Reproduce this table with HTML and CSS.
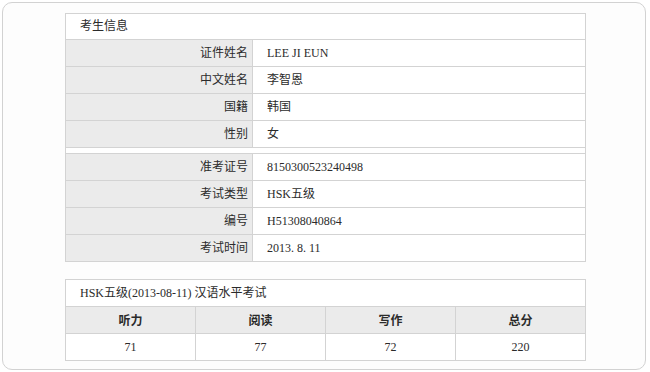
FILE: index.html
```html
<!DOCTYPE html>
<html lang="zh">
<head>
<meta charset="utf-8">
<link rel="stylesheet" href="styles.css">
</head>
<body>
<div class="frame">
  <table class="info">
    <colgroup><col class="c-label"><col class="c-value"></colgroup>
    <tr><td class="title" colspan="2">考生信息</td></tr>
    <tr><td class="label">证件姓名</td><td class="value">LEE JI EUN</td></tr>
    <tr><td class="label">中文姓名</td><td class="value">李智恩</td></tr>
    <tr><td class="label">国籍</td><td class="value">韩国</td></tr>
    <tr><td class="label">性别</td><td class="value">女</td></tr>
    <tr class="spacer"><td colspan="2"></td></tr>
    <tr><td class="label">准考证号</td><td class="value">8150300523240498</td></tr>
    <tr><td class="label">考试类型</td><td class="value">HSK五级</td></tr>
    <tr><td class="label">编号</td><td class="value">H51308040864</td></tr>
    <tr><td class="label">考试时间</td><td class="value">2013. 8. 11</td></tr>
  </table>
  <table class="scores">
    <colgroup><col class="c-q"><col class="c-q"><col class="c-q"><col class="c-q"></colgroup>
    <tr><td class="title" colspan="4">HSK五级(2013-08-11) 汉语水平考试</td></tr>
    <tr class="head"><td>听力</td><td>阅读</td><td>写作</td><td>总分</td></tr>
    <tr class="data"><td>71</td><td>77</td><td>72</td><td>220</td></tr>
  </table>
</div>
</body>
</html>
```
FILE: styles.css
```css
html, body {
  margin: 0;
  padding: 0;
  background: #ffffff;
}
body {
  font-family: "Liberation Serif", "Noto Sans CJK SC", serif;
  font-size: 12px;
  color: #2b2b2b;
}
.frame {
  margin: 2px;
  width: 644px;
  height: 368px;
  box-sizing: border-box;
  border: 1px solid #d2d2d2;
  border-radius: 10px;
  background: #fdfdfd;
  padding-top: 10px;
}
table {
  width: 521px;
  margin: 0 0 0 62px;
  border-collapse: separate;
  border-spacing: 0;
  border-top: 1px solid #d3d3d3;
  border-left: 1px solid #d3d3d3;
  table-layout: fixed;
}
.c-label { width: 187px; }
.c-q { width: 130px; }
td {
  padding: 0;
  border-right: 1px solid #d3d3d3;
  border-bottom: 1px solid #d3d3d3;
  line-height: 26px;
  white-space: nowrap;
}
.title {
  background: #ffffff;
  padding-left: 14px;
  line-height: 25px;
}
.info .label {
  background: #ebebeb;
  text-align: right;
  padding-right: 4px;
}
.info .value {
  background: #ffffff;
  padding-left: 14px;
}
.spacer td {
  line-height: 5px;
  height: 5px;
  background: #ffffff;
}
.scores {
  margin-top: 17px;
}
.scores .title {
  line-height: 26px;
}
.scores .head td {
  background: #ebebeb;
  text-align: center;
  font-weight: bold;
  font-family: "Noto Sans CJK SC", sans-serif;
}
.scores .data td {
  background: #ffffff;
  text-align: center;
}
```
